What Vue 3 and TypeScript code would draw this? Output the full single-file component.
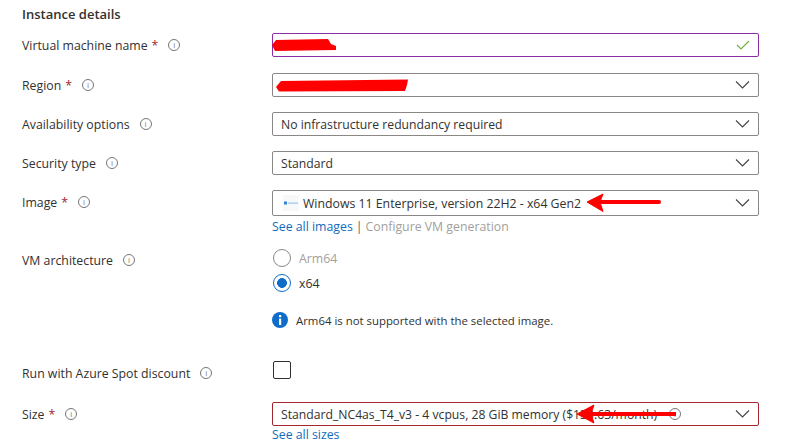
<script setup lang="ts">
const chevron = 'M1 1.5 L7.5 8 L14 1.5'
</script>

<template>
  <div class="page">
    <h2 class="heading">Instance details</h2>

    <div class="row name-row">
      <div class="label">Virtual machine name<span class="req">*</span><span class="info">i</span></div>
      <div class="box valid">
        <svg class="check" width="14" height="10" viewBox="0 0 14 10"><path d="M1 5 L5 9 L13 1" fill="none" stroke="#6bb13f" stroke-width="1.1" /></svg>
      </div>
    </div>

    <div class="row region-row">
      <div class="label">Region<span class="req">*</span><span class="info">i</span></div>
      <div class="box">
        <svg class="chev" width="15" height="10" viewBox="0 0 15 10"><path :d="chevron" fill="none" stroke="#444" stroke-width="1.1" /></svg>
      </div>
    </div>

    <div class="row avail-row">
      <div class="label">Availability options<span class="info">i</span></div>
      <div class="box">
        <span class="value">No infrastructure redundancy required</span>
        <svg class="chev" width="15" height="10" viewBox="0 0 15 10"><path :d="chevron" fill="none" stroke="#444" stroke-width="1.1" /></svg>
      </div>
    </div>

    <div class="row security-row">
      <div class="label">Security type<span class="info">i</span></div>
      <div class="box">
        <span class="value">Standard</span>
        <svg class="chev" width="15" height="10" viewBox="0 0 15 10"><path :d="chevron" fill="none" stroke="#444" stroke-width="1.1" /></svg>
      </div>
    </div>

    <div class="row image-row">
      <div class="label">Image<span class="req">*</span><span class="info">i</span></div>
      <div>
        <div class="box tall">
          <svg class="logo" width="16" height="16" viewBox="0 0 16 16">
            <rect width="16" height="16" fill="#f7f8fa" />
            <rect x="1" y="6.5" width="3" height="3" fill="#2f86d6" />
            <rect x="5" y="7.5" width="10" height="1.2" fill="#9cc4ea" />
          </svg>
          <span>Windows 11 Enterprise, version 22H2 - x64 Gen2</span>
          <svg class="chev" width="15" height="10" viewBox="0 0 15 10"><path :d="chevron" fill="none" stroke="#444" stroke-width="1.1" /></svg>
        </div>
        <div class="links"><a class="link">See all images</a><span class="sep">|</span><span class="disabled">Configure VM generation</span></div>
      </div>
    </div>

    <div class="row arch-row">
      <div class="label">VM architecture<span class="info">i</span></div>
      <div>
        <div class="radio-line muted"><span class="radio off"></span>Arm64</div>
        <div class="radio-line second"><span class="radio on"></span>x64</div>
        <div class="note">
          <svg width="16" height="16" viewBox="0 0 16 16">
            <circle cx="8" cy="8" r="8" fill="#0f6cc9" />
            <rect x="7" y="3" width="2.2" height="2.2" fill="#fff" />
            <rect x="7" y="6.6" width="2.2" height="6.4" fill="#fff" />
          </svg>
          <span>Arm64 is not supported with the selected image.</span>
        </div>
      </div>
    </div>

    <div class="row spot-row">
      <div class="label">Run with Azure Spot discount<span class="info">i</span></div>
      <div><span class="checkbox"></span></div>
    </div>

    <div class="row size-row">
      <div class="label">Size<span class="req">*</span><span class="info">i</span></div>
      <div>
        <div class="box error">
          <span class="value">Standard_NC4as_T4_v3 - 4 vcpus, 28 GiB memory ($130.63/month)</span>
          <span class="info inline">i</span>
          <svg class="chev" width="15" height="10" viewBox="0 0 15 10"><path :d="chevron" fill="none" stroke="#444" stroke-width="1.1" /></svg>
        </div>
        <div class="links small"><a class="link">See all sizes</a></div>
      </div>
    </div>

    <svg class="marks" width="787" height="445" viewBox="0 0 787 445">
      <path d="M272 45 L276 40 L328 39 L331 44 L336 46 L336 50 L275 51 Z" fill="#f00" />
      <path d="M276 87 L281 81 L408 79.5 L407 85 L405 91 L279 91.5 Z" fill="#f00" />
      <path d="M598 202 L659 202" stroke="#f00" stroke-width="4" stroke-linecap="round" fill="none" />
      <path d="M587 202 L603 194 L600 202 L603 211.5 Z" fill="#f00" stroke="#f00" stroke-width="1" stroke-linejoin="round" />
      <path d="M590 414 L676 414" stroke="#f00" stroke-width="4" fill="none" />
      <path d="M577 414 L594 405 L591 414 L594 423 Z" fill="#f00" stroke="#f00" stroke-width="1" stroke-linejoin="round" />
    </svg>
  </div>
</template>

<style>
body { margin: 0; background: #fff; }
</style>

<style scoped>
.page {
  position: relative;
  width: 787px;
  height: 445px;
  overflow: hidden;
  background: #fff;
  box-sizing: border-box;
  padding: 5px 28px 0 22px;
  font-family: "Open Sans", "Noto Sans", sans-serif;
  font-size: 12.3px;
  color: #323130;
}
.heading {
  margin: 0;
  height: 18px;
  line-height: 18px;
  font-size: 13px;
  font-weight: 600;
}
.row {
  display: grid;
  grid-template-columns: 250px 487px;
  align-items: start;
}
.name-row { margin-top: 10px; }
.region-row { margin-top: 16px; }
.avail-row { margin-top: 15px; }
.security-row { margin-top: 15px; }
.image-row { margin-top: 15px; }
.arch-row { margin-top: 0; }
.spot-row { margin-top: 33px; }
.size-row { margin-top: 17px; }
.label {
  display: flex;
  align-items: center;
  height: 24px;
}
.req { color: #a4262c; margin-left: 4px; }
.info {
  display: inline-flex;
  align-items: center;
  justify-content: center;
  box-sizing: border-box;
  width: 12px;
  height: 12px;
  margin-left: 10px;
  border: 1px solid #767676;
  border-radius: 50%;
  font-size: 8px;
  line-height: 1;
  color: #767676;
}
.info.inline { margin-left: 12px; }
.box {
  display: flex;
  align-items: center;
  box-sizing: border-box;
  height: 24px;
  padding: 0 8px 0 8px;
  border: 1px solid #8a8886;
  border-radius: 2px;
  white-space: nowrap;
}
.box.valid { border-color: #8b2ea6; }
.box.error { border-color: #a4262c; }
.box.tall { height: 26px; }
.value { font-size: 12.2px; }
.chev, .check { margin-left: auto; }
.logo { margin-right: 4px; margin-left: 2px; }
.links { margin-top: 2px; line-height: 17px; height: 17px; }
.links.small { margin-top: 0; }
.link { color: #0f6cbd; }
.sep { color: #605e5c; margin: 0 3px; }
.disabled { color: #a19f9d; }
.arch-row .label { margin-top: 13px; }
.radio-line {
  display: flex;
  align-items: center;
  height: 18px;
  margin-top: 14px;
  padding-left: 1px;
}
.radio-line.second { margin-top: 7px; }
.muted { color: #a19f9d; }
.radio {
  box-sizing: border-box;
  width: 18px;
  height: 18px;
  margin-right: 8px;
  border-radius: 50%;
  border: 1px solid #8a8886;
  background: #fff;
}
.radio.on {
  border-color: #0f6cc9;
  background: radial-gradient(circle, #0f6cc9 0 4.6px, #fff 5.2px);
}
.note {
  display: flex;
  align-items: center;
  gap: 8px;
  height: 16px;
  margin-top: 20px;
  font-size: 11.4px;
}
.checkbox {
  display: block;
  box-sizing: border-box;
  width: 18px;
  height: 18px;
  margin: 0 0 0 1px;
  border: 1px solid #323130;
  border-radius: 2px;
}
.marks {
  position: absolute;
  left: 0;
  top: 0;
  pointer-events: none;
}
</style>
